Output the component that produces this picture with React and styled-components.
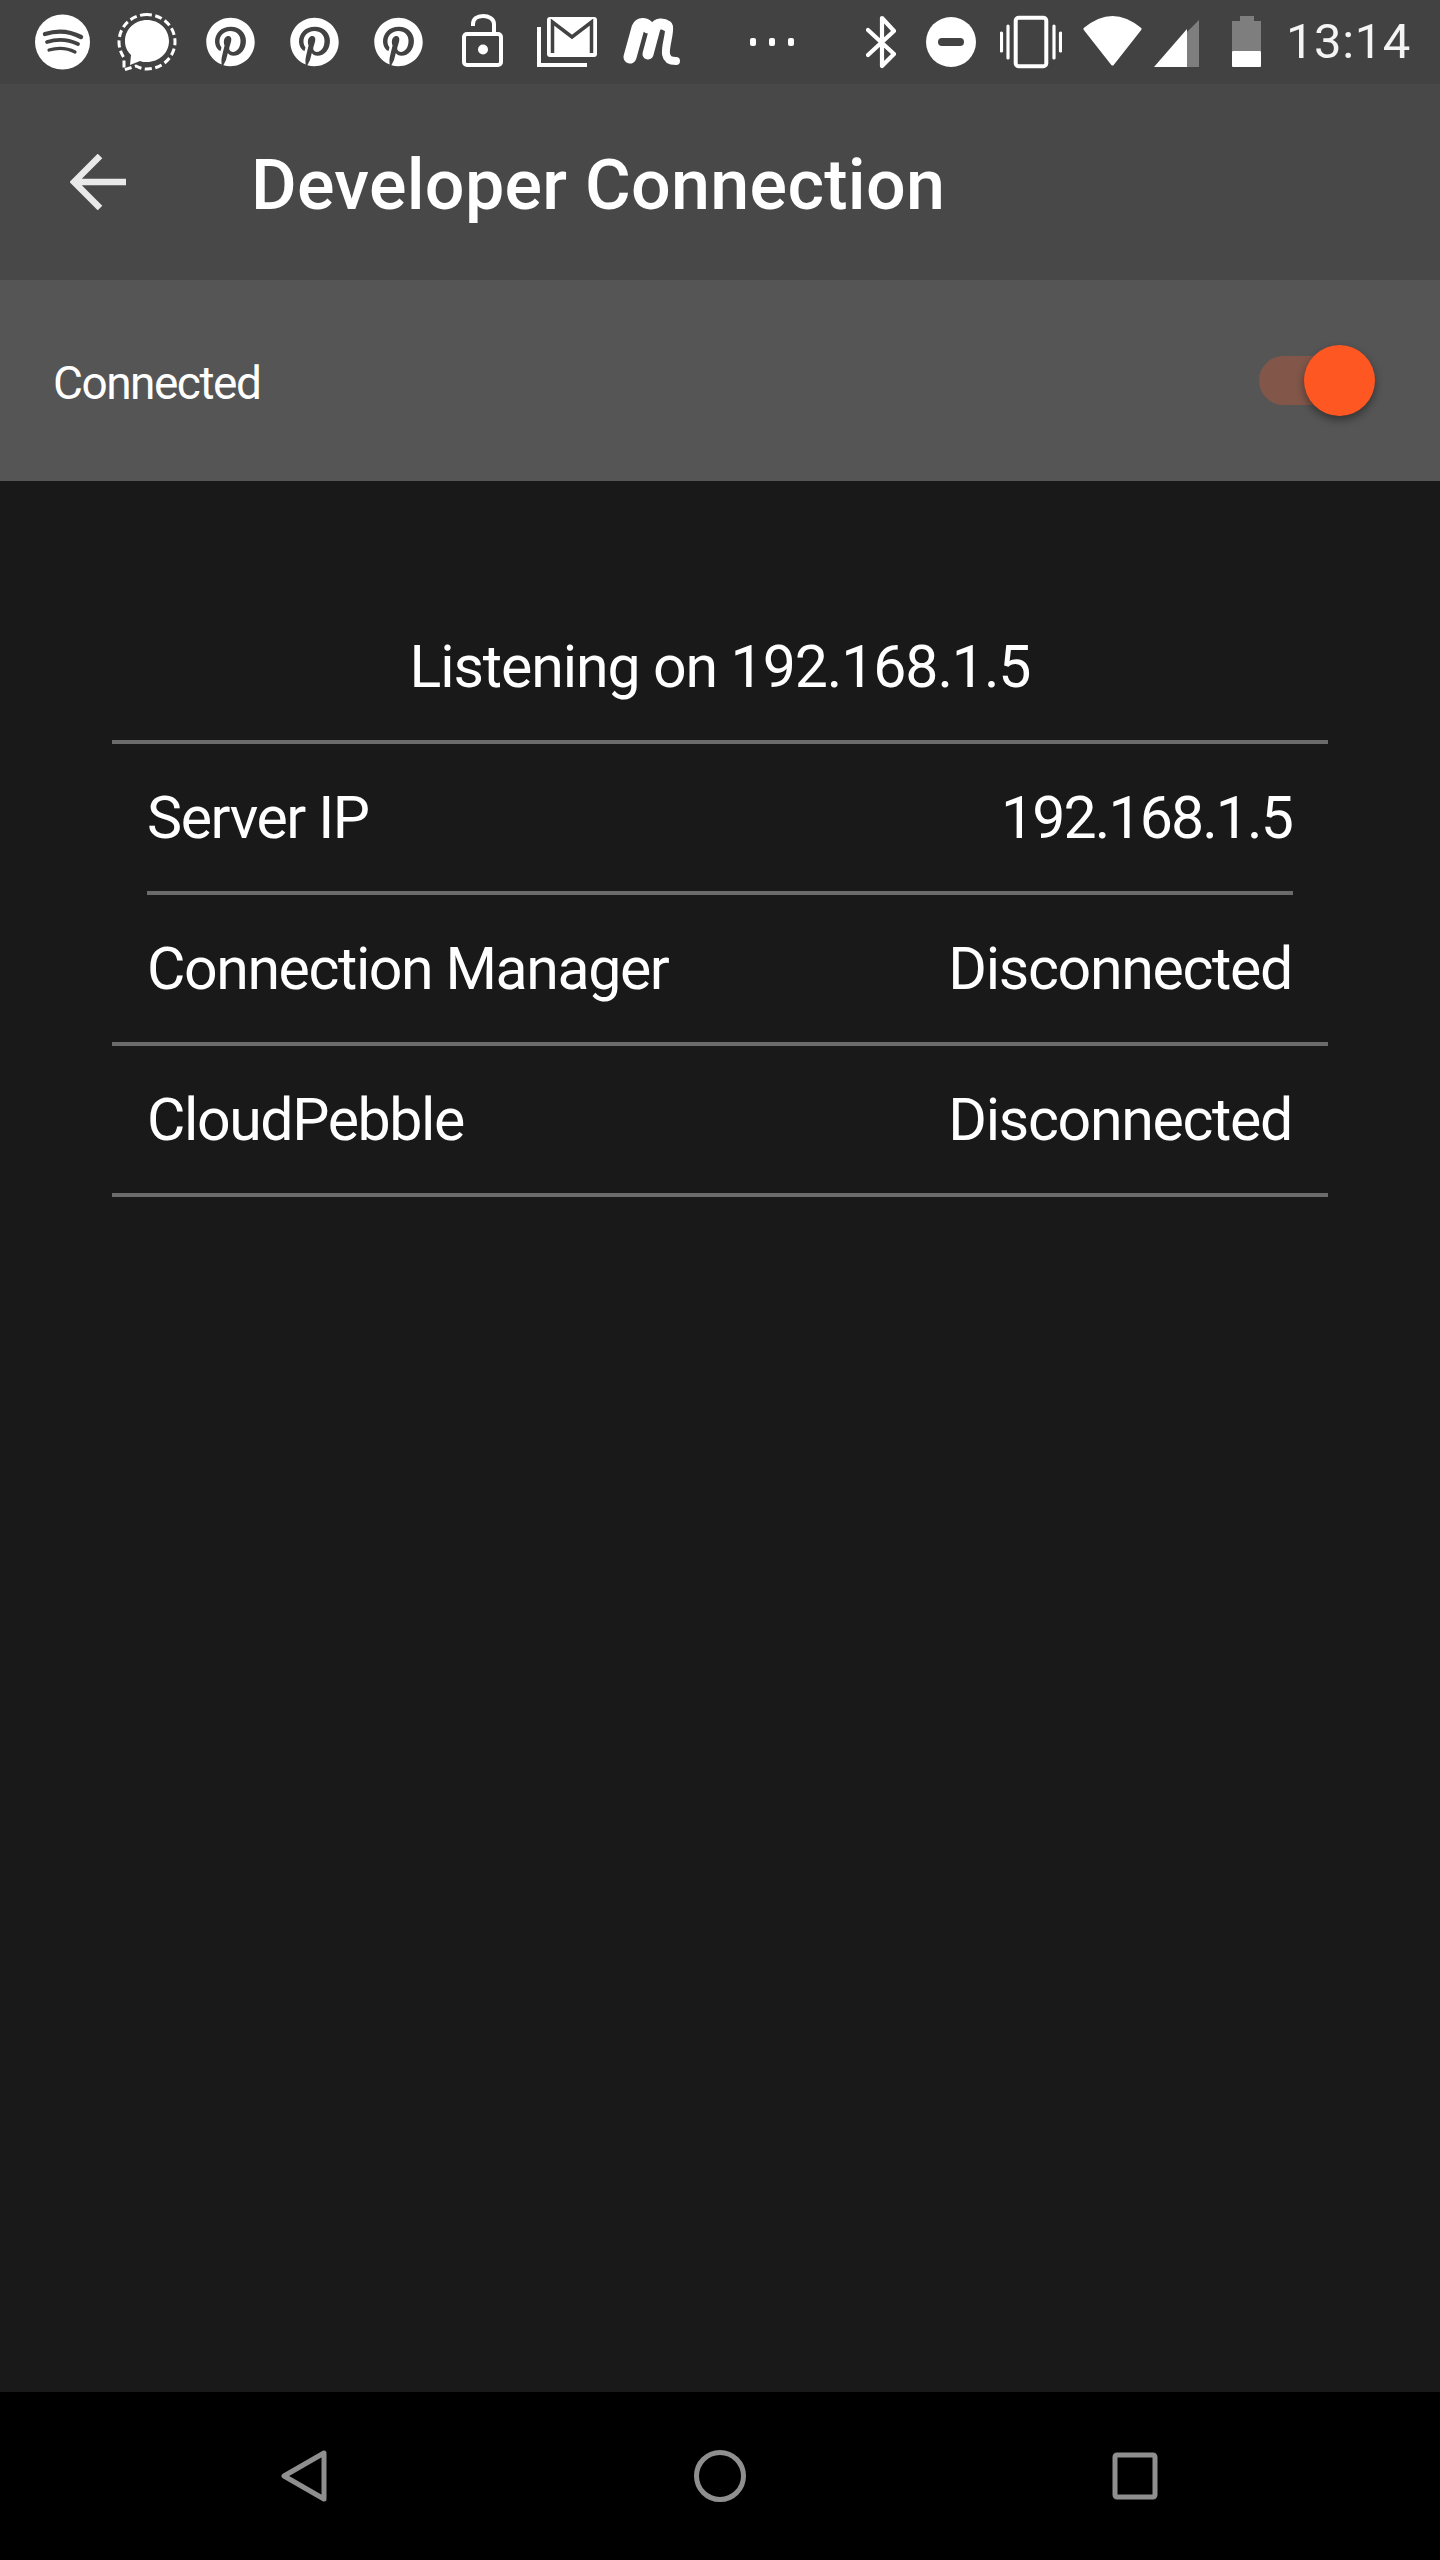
import React from "react";
import styled, { createGlobalStyle } from "styled-components";
import { FaPinterest } from "react-icons/fa";

const Global = createGlobalStyle`
  html, body {
    margin: 0;
    padding: 0;
    background: #191919;
  }
  * {
    box-sizing: border-box;
  }
`;

const Screen = styled.div`
  width: 1440px;
  height: 2560px;
  display: flex;
  flex-direction: column;
  background: #191919;
  color: #fff;
  font-family: Roboto, "Noto Sans", sans-serif;
  overflow: hidden;
`;

const StatusBar = styled.div`
  height: 84px;
  flex: none;
  display: flex;
  align-items: center;
  justify-content: space-between;
  padding: 0 29px 0 35px;
  background: #424242;
`;

const IconGroup = styled.div`
  display: flex;
  align-items: center;
`;

const Glyph = styled.svg`
  flex: none;
  display: block;
  height: 84px;
  width: ${(p) => p.$w}px;
  margin-left: ${(p) => p.$gap || 0}px;
`;

const PinIcon = styled(FaPinterest)`
  flex: none;
  display: block;
  width: 51px;
  height: 50px;
  color: #fff;
  margin-left: ${(p) => p.$gap || 0}px;
`;

const Clock = styled.span`
  margin-left: 25px;
  font-size: 49px;
  line-height: 84px;
  letter-spacing: 0.6px;
  color: #f4f4f4;
`;

const Toolbar = styled.header`
  height: 196px;
  flex: none;
  display: flex;
  align-items: center;
  padding-left: 70px;
  background: #484848;
`;

const BackArrow = styled.svg`
  width: 56px;
  height: 56px;
  flex: none;
`;

const Title = styled.h1`
  margin: 6px 0 0 125px;
  font-size: 70px;
  font-weight: 500;
  letter-spacing: 0.3px;
  color: #fff;
`;

const SwitchBand = styled.div`
  height: 201px;
  flex: none;
  display: flex;
  align-items: center;
  justify-content: space-between;
  padding: 0 65px 0 53px;
  background: #555;
`;

const SwitchLabel = styled.span`
  margin-top: 5px;
  font-size: 46px;
  font-weight: 400;
  letter-spacing: -1.5px;
`;

const Switch = styled.div`
  position: relative;
  width: 116px;
  height: 71px;
  display: flex;
  align-items: center;
`;

const Track = styled.div`
  width: 100px;
  height: 49px;
  border-radius: 25px;
  background: #82574a;
`;

const Knob = styled.div`
  position: absolute;
  right: 0;
  top: 0;
  width: 71px;
  height: 71px;
  border-radius: 50%;
  background: #ff5722;
  box-shadow: 0 4px 8px rgba(0, 0, 0, 0.4);
`;

const Content = styled.main`
  flex: 1;
  padding: 0 112px;
`;

const Heading = styled.div`
  height: 263px;
  display: flex;
  align-items: flex-end;
  justify-content: center;
  padding-bottom: 39px;
  border-bottom: 4px solid #6b6b6b;
  font-size: 59px;
  font-weight: 400;
  letter-spacing: -1.1px;
`;

const Row = styled.div`
  height: 151px;
  display: flex;
  align-items: center;
  justify-content: space-between;
  border-bottom: 4px solid #6b6b6b;
  margin: 0 ${(p) => (p.$inset ? 35 : 0)}px;
  padding: 0 ${(p) => (p.$inset ? 0 : 35)}px;
  font-size: 59px;
  font-weight: 400;
  letter-spacing: -1.4px;
`;

const RowValue = styled.span`
  margin-right: 1px;
  letter-spacing: ${(p) => (p.$tight ? -1.9 : -1.3)}px;
`;

const NavBar = styled.nav`
  height: 168px;
  flex: none;
  display: flex;
  align-items: center;
  justify-content: space-between;
  padding: 0 282px 0 281px;
  background: #000;
`;

const NavIcon = styled.svg`
  display: block;
  width: ${(p) => p.$w}px;
  height: 52px;
  fill: none;
  stroke: #8f8f8f;
  stroke-width: 5;
  stroke-linejoin: round;
`;

const rows = [
  { label: "Server IP", value: "192.168.1.5", inset: true },
  { label: "Connection Manager", value: "Disconnected" },
  { label: "CloudPebble", value: "Disconnected" },
];

function StatusIcons() {
  const dark = "#424242";
  return (
    <IconGroup>
      {/* spotify */}
      <Glyph $w={55} viewBox="0 0 55 84">
        <ellipse cx="27.5" cy="42" rx="27.5" ry="27.5" fill="#fff" />
        <g fill="none" stroke={dark} strokeLinecap="round">
          <path d="M10 34Q29 28 46 37" strokeWidth="4.4" />
          <path d="M12 42Q28 37 43 44" strokeWidth="3.8" />
          <path d="M14 50Q28 46 40 52" strokeWidth="3.2" />
        </g>
      </Glyph>
      {/* signal */}
      <Glyph $w={60} $gap={27} viewBox="0 0 60 84">
        <path d="M30 20C18 20 8 29 8 41C8 47 10 51 14 55L13 65L23 61C25 62 27 62 30 62C42 62 52 53 52 41C52 29 42 20 30 20Z" fill="#fff" />
        <path d="M30 14.500C15 14.500 2 26 2 42C2 48 4 53 7 58L7 70L19 66C23 68 26 69 30 69C45 69 58 57 58 42C58 26 45 14.500 30 14.500Z" fill="none" stroke="#fff" strokeWidth="3" strokeDasharray="7 3.500" />
      </Glyph>
      <PinIcon $gap={28} />
      <PinIcon $gap={33} />
      <PinIcon $gap={33} />
      {/* open lock */}
      <Glyph $w={41} $gap={38} viewBox="0 0 41 84">
        <rect x="2" y="34" width="37" height="31" rx="3" fill="none" stroke="#fff" strokeWidth="4" />
        <path d="M11 26V24C11 19 15 16 21 16C27 16 32 19 32 24V32" fill="none" stroke="#fff" strokeWidth="4" />
        <ellipse cx="21" cy="49.500" rx="5" ry="5" fill="#fff" />
      </Glyph>
      {/* gmail stack */}
      <Glyph $w={60} $gap={34} viewBox="0 0 60 84">
        <path d="M2 27V65H50" fill="none" stroke="#fff" strokeWidth="4" />
        <rect x="10" y="17" width="50" height="40" rx="3" fill="#fff" />
        <path d="M15.500 53V22L35 37L54.500 22V53" fill="none" stroke={dark} strokeWidth="3.500" />
      </Glyph>
      {/* meetup */}
      <Glyph $w={57} $gap={26} viewBox="0 0 57 84">
        <g fill="none" stroke="#fff" strokeLinecap="round" strokeLinejoin="round">
          <path d="M7 57L15 28C17 23 22 24 25 27" strokeWidth="13" />
          <path d="M25 54L32 28C34 23 40 23 44 26" strokeWidth="11" />
          <path d="M46 27C47 34 42 46 43 54C44 60 48 61 53 61" strokeWidth="8" />
        </g>
      </Glyph>
      {/* overflow dots */}
      <Glyph $w={45} $gap={70} viewBox="0 0 45 84">
        <rect x="0" y="38" width="6" height="8" rx="2" fill="#fff" />
        <rect x="19" y="38" width="6" height="8" rx="2" fill="#fff" />
        <rect x="38" y="38" width="6" height="8" rx="2" fill="#fff" />
      </Glyph>
    </IconGroup>
  );
}

function SystemIcons() {
  return (
    <IconGroup>
      <Glyph $w={30} viewBox="0 0 30 84">
        <path d="M2 30L28 54L16 66V18L28 31L2 55" fill="none" stroke="#fff" strokeWidth="4.200" strokeLinejoin="round" strokeLinecap="round" />
      </Glyph>
      <Glyph $w={50} $gap={30} viewBox="0 0 50 84">
        <circle cx="25" cy="42" r="25" fill="#fff" />
        <rect x="12" y="38" width="26" height="8" rx="4" fill="#424242" />
      </Glyph>
      <Glyph $w={62} $gap={24} viewBox="0 0 62 84">
        <rect x="15.700" y="17.700" width="30.600" height="48.600" rx="3" fill="none" stroke="#fff" strokeWidth="4" />
        <g stroke="#fff" strokeWidth="3.200" strokeLinecap="round">
          <path d="M1.500 33V51" />
          <path d="M8 26V58" />
          <path d="M54 26V58" />
          <path d="M60.500 33V51" />
        </g>
      </Glyph>
      <Glyph $w={59} $gap={21} viewBox="0 0 59 84">
        <path d="M2 29Q29.500 6 57 29L29.500 64Z" fill="#fff" stroke="#fff" strokeWidth="3" strokeLinejoin="round" />
      </Glyph>
      <Glyph $w={47} $gap={11} viewBox="0 0 47 84">
        <path d="M34 67V32L46 20V67Z" fill="#7e7e7e" />
        <path d="M1 67L34 29V67Z" fill="#fff" />
      </Glyph>
      <Glyph $w={29} $gap={32} viewBox="0 0 29 84">
        <path d="M8 16H22V21H29V51H0V21H8Z" fill="#7e7e7e" />
        <rect x="0" y="51" width="29" height="16" rx="1" fill="#fff" />
      </Glyph>
      <Clock>13:14</Clock>
    </IconGroup>
  );
}

export default function App() {
  return (
    <Screen>
      <Global />
      <StatusBar>
        <StatusIcons />
        <SystemIcons />
      </StatusBar>
      <Toolbar>
        <BackArrow viewBox="0 0 56 56">
          <path d="M30 2L4 28L30 54M3 28H56" fill="none" stroke="#e9e9e9" strokeWidth="6.500" />
        </BackArrow>
        <Title>Developer Connection</Title>
      </Toolbar>
      <SwitchBand>
        <SwitchLabel>Connected</SwitchLabel>
        <Switch>
          <Track />
          <Knob />
        </Switch>
      </SwitchBand>
      <Content>
        <Heading>Listening on 192.168.1.5</Heading>
        {rows.map((r) => (
          <Row key={r.label} $inset={r.inset}>
            <span>{r.label}</span>
            <RowValue $tight={r.inset}>{r.value}</RowValue>
          </Row>
        ))}
      </Content>
      <NavBar>
        <NavIcon $w={47} viewBox="0 0 47 52">
          <path d="M43 3V49L3 26Z" />
        </NavIcon>
        <NavIcon $w={52} viewBox="0 0 52 52">
          <circle cx="26" cy="26" r="23.500" />
        </NavIcon>
        <NavIcon $w={46} viewBox="0 0 46 52">
          <rect x="3" y="5" width="40" height="42" rx="2" />
        </NavIcon>
      </NavBar>
    </Screen>
  );
}
